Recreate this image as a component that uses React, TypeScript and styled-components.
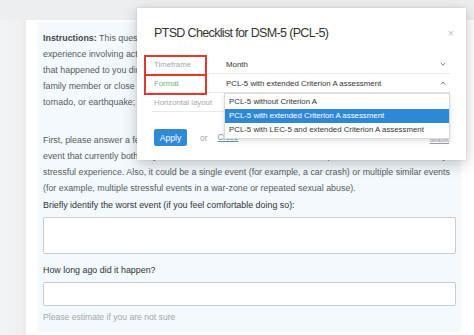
import React from "react";
import styled, { createGlobalStyle } from "styled-components";

const GlobalStyle = createGlobalStyle`
  html, body { margin: 0; padding: 0; background: #ffffff; }
  body { font-family: "Liberation Sans", Helvetica, Arial, sans-serif; }
  * { box-sizing: border-box; }
`;

const Page = styled.div`
  position: relative;
  width: 474px;
  height: 335px;
  overflow: hidden;
  display: flex;
  flex-direction: column;
  background: #ffffff;
`;

const TopBar = styled.div`
  height: 20px;
  flex: none;
  background: #eceef0;
`;

const Body = styled.div`
  flex: 1;
  display: flex;
  min-height: 0;
`;

const LeftRail = styled.div`
  width: 26px;
  flex: none;
  background: linear-gradient(to right, #f1f3f5 0%, #eef0f2 80%, #e9ebed 100%);
`;

const Main = styled.div`
  flex: 1;
  padding: 2px 13px 3px 11px;
  background: #ffffff;
  display: flex;
`;

const Panel = styled.div`
  flex: 1;
  overflow: hidden;
  background: #f3f9fd;
  padding: 8px 5px 0 6px;
  font-size: 8.9px;
  line-height: 16px;
  color: #575c62;
`;

const Para = styled.p<{ $gap: number }>`
  margin: 0 0 ${(p) => p.$gap}px 0;
  white-space: nowrap;
`;

const Strong = styled.b`
  color: #45484c;
`;

const Question = styled.div<{ $top: number }>`
  color: #2f3235;
  margin-top: ${(p) => p.$top}px;
  margin-bottom: 4px;
`;

const TextBox = styled.div<{ $h: number }>`
  height: ${(p) => p.$h}px;
  background: #ffffff;
  border: 1px solid #c9cbcd;
  border-radius: 2px;
`;

const Hint = styled.div`
  margin-top: 5px;
  font-size: 8.6px;
  line-height: 12px;
  color: #a3a7ab;
`;

const Modal = styled.div`
  position: absolute;
  left: 137px;
  top: 8px;
  width: 329px;
  height: 152px;
  background: #ffffff;
  box-shadow: 0 4px 14px rgba(0, 0, 0, 0.22), 0 0 2px rgba(0, 0, 0, 0.12);
  padding: 16px 16px 0 15px;
`;

const Header = styled.div`
  display: flex;
  align-items: center;
  justify-content: space-between;
  padding: 0 2px;
  height: 17px;
  margin-bottom: 14px;
`;

const Title = styled.div`
  font-size: 12.5px;
  letter-spacing: -0.65px;
  color: #333;
`;

const CloseX = styled.span`
  font-size: 11px;
  color: #c2c4c6;
  margin-right: -6px;
`;

const Row = styled.div<{ $h: number }>`
  display: grid;
  grid-template-columns: 72px 1fr 14px;
  align-items: center;
  height: ${(p) => p.$h}px;
  padding-left: 2px;
  border-bottom: 1px solid #e8e9ea;
  font-size: 7.85px;
`;

const Label = styled.span<{ $marked?: boolean; $tone: string }>`
  position: relative;
  align-self: stretch;
  display: flex;
  align-items: center;
  color: ${(p) => p.$tone};
  font-size: 7.8px;
  &::before {
    content: "";
    display: ${(p) => (p.$marked ? "block" : "none")};
    position: absolute;
    left: -10px;
    top: 0;
    width: 59px;
    height: 17px;
    border: 2px solid #e2392f;
  }
`;

const Value = styled.span`
  color: #333;
`;

const Chevron = styled.svg`
  width: 6px;
  height: 4px;
  justify-self: center;
`;

const Footer = styled.div`
  display: flex;
  align-items: center;
  margin-top: 17px;
  padding-left: 2px;
  font-size: 8.4px;
`;

const Button = styled.button`
  font-family: inherit;
  font-size: 8.6px;
  color: #ffffff;
  background: #2e89d6;
  border: none;
  border-radius: 2px;
  width: 33px;
  height: 17px;
  padding: 0;
`;

const Or = styled.span`
  color: #a0a3a6;
  margin-left: 13px;
`;

const LinkText = styled.span`
  color: #6b93b0;
  text-decoration: underline;
  margin-left: 10px;
  font-size: 8.2px;
`;

const FooterNote = styled.span`
  margin-left: auto;
  margin-right: 1px;
  margin-top: 5px;
  font-size: 5.5px;
  color: #9aa0a6;
  text-decoration: underline;
`;

const Dropdown = styled.ul`
  position: absolute;
  left: 87px;
  top: 85px;
  width: 226px;
  margin: 0;
  padding: 1px 0;
  list-style: none;
  background: #ffffff;
  border: 1px solid #d8dadc;
  box-shadow: 0 2px 5px rgba(0, 0, 0, 0.12);
`;

const Option = styled.li<{ $active?: boolean }>`
  height: 14px;
  line-height: 14px;
  padding-left: 4px;
  font-size: 7.85px;
  white-space: nowrap;
  color: ${(p) => (p.$active ? "#ffffff" : "#333")};
  background: ${(p) => (p.$active ? "#2e88d6" : "transparent")};
`;

function Caret({ up }: { up?: boolean }) {
  return (
    <Chevron viewBox="0 0 6 4">
      <path
        d={up ? "M0.8 3.4 L3 1 L5.2 3.4" : "M0.8 0.8 L3 3.2 L5.2 0.8"}
        fill="none"
        stroke="#6f7276"
        strokeWidth="0.9"
      />
    </Chevron>
  );
}

export default function App() {
  return (
    <>
      <GlobalStyle />
      <Page>
        <TopBar />
        <Body>
          <LeftRail />
          <Main>
            <Panel>
              <Para $gap={22}>
                <Strong>Instructions:</Strong> This questionnaire asks about problems you may have had after a very stressful
                <br />
                experience involving actual or threatened death, serious injury, or sexual violence. It could be something
                <br />
                that happened to you directly, something you witnessed, or something you learned happened to a close
                <br />
                family member or close friend. Some examples are a serious accident; fire; disaster such as a hurricane,
                <br />
                tornado, or earthquake; physical or sexual attack or abuse; war; homicide; or suicide.
              </Para>
              <Para $gap={0}>
                First, please answer a few questions about your worst event, which for this questionnaire means the
                <br />
                event that currently bothers you the most. This could be one of the examples above or some other very
                <br />
                stressful experience. Also, it could be a single event (for example, a car crash) or multiple similar events
                <br />
                (for example, multiple stressful events in a war-zone or repeated sexual abuse).
              </Para>
              <Question $top={1}>Briefly identify the worst event (if you feel comfortable doing so):</Question>
              <TextBox $h={37} />
              <Question $top={8}>How long ago did it happen?</Question>
              <TextBox $h={24} />
              <Hint>Please estimate if you are not sure</Hint>
            </Panel>
          </Main>
        </Body>

        <Modal>
          <Header>
            <Title>PTSD Checklist for DSM-5 (PCL-5)</Title>
            <CloseX>×</CloseX>
          </Header>
          <Row $h={19}>
            <Label $marked $tone="#a6a3b3">Timeframe</Label>
            <Value>Month</Value>
            <Caret />
          </Row>
          <Row $h={19}>
            <Label $marked $tone="#79ad7c">Format</Label>
            <Value>PCL-5 with extended Criterion A assessment</Value>
            <Caret up />
          </Row>
          <Row $h={19}>
            <Label $tone="#a5a8ab">Horizontal layout</Label>
            <Value />
            <span />
          </Row>
          <Footer>
            <Button>Apply</Button>
            <Or>or</Or>
            <LinkText>Close</LinkText>
            <FooterNote>defaults</FooterNote>
          </Footer>
          <Dropdown>
            <Option>PCL-5 without Criterion A</Option>
            <Option $active>PCL-5 with extended Criterion A assessment</Option>
            <Option>PCL-5 with LEC-5 and extended Criterion A assessment</Option>
          </Dropdown>
        </Modal>
      </Page>
    </>
  );
}
